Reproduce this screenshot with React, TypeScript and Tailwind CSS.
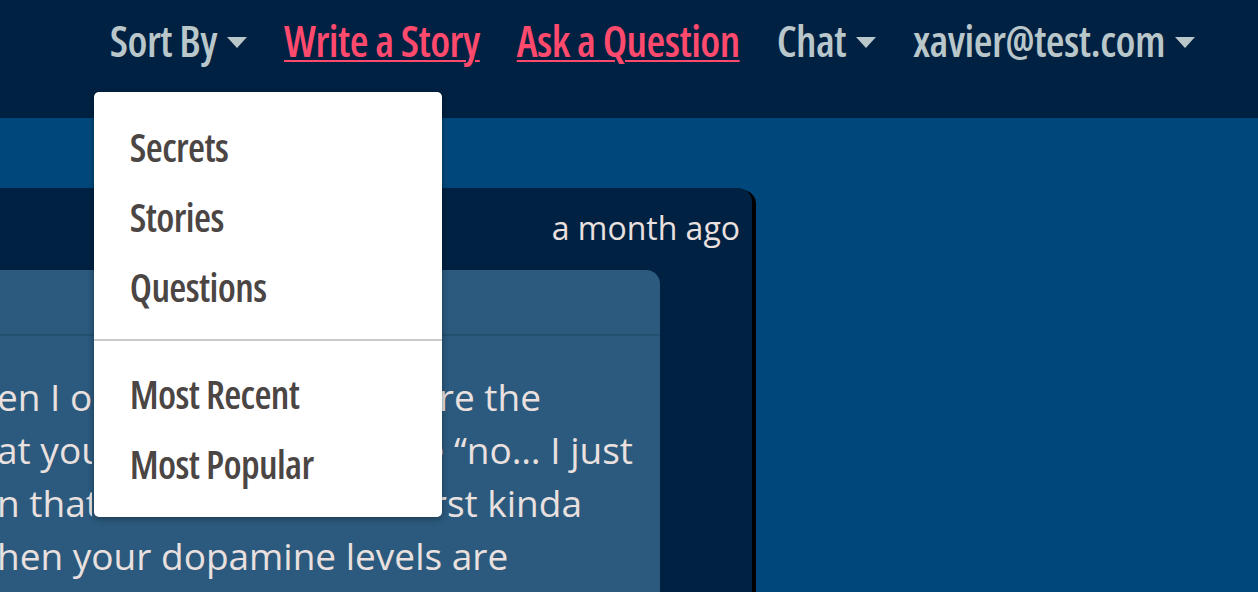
import React from "react";

const cond = { fontFamily: '"Open Sans", "DejaVu Sans", sans-serif' };
const body = { fontFamily: '"Open Sans", "Noto Sans", sans-serif' };

function Caret() {
  return <span className="inline-block w-0 h-0 border-t-[11px] border-t-[#b9c7cb] border-x-[10px] border-x-transparent ml-[10px] mt-[2px]" />;
}

function NavItem({ label, caret, link }: { label: string; caret?: boolean; link?: boolean }) {
  return (
    <div className="flex items-center whitespace-nowrap">
      <span
        className={
          link
            ? "text-[#ff4a6d] underline decoration-2 underline-offset-[3px]"
            : "text-[#b9c7cb]"
        }
      >
        {label}
      </span>
      {caret && <Caret />}
    </div>
  );
}

const items1 = ["Secrets", "Stories", "Questions"];
const items2 = ["Most Recent", "Most Popular"];

const lines = [
  { left: "en I or", right: "ore the", w: "w-[544px]" },
  { left: "at you", right: "e \u201cno\u2026 I just", w: "w-[636px]" },
  { left: "n that j", right: "rst kinda", w: "w-[585px]" },
];

export default function App() {
  return (
    <div className="w-[1258px] h-[592px] overflow-hidden bg-[#00487b]" style={body}>
      <nav className="h-[118px] bg-[#012142] flex justify-end items-start pr-[63px] pt-[18px]" style={cond}>
        <div className="flex items-center gap-[37px] text-[43px] font-semibold font-stretch-[75%] leading-[46px] tracking-[-0.55px]">
          <div className="relative">
            <NavItem label="Sort By" caret />
            <div className="absolute left-[-16px] top-[74px] w-[348px] bg-white rounded-[5px] shadow-[0_2px_6px_rgba(0,0,0,0.35)] z-10 pt-[20px] pb-[18px] tracking-[-0.6px]">
              {items1.map((t) => (
                <div key={t} className="h-[70px] flex items-center pl-[36px] text-[#4b4544] text-[39px] whitespace-nowrap">
                  {t}
                </div>
              ))}
              <div className="h-[2px] bg-[#c9c9c9] mt-[17px] mb-[18px]" />
              {items2.map((t) => (
                <div key={t} className="h-[70px] flex items-center pl-[36px] text-[#4b4544] text-[39px] whitespace-nowrap">
                  {t}
                </div>
              ))}
            </div>
          </div>
          <NavItem label="Write a Story" link />
          <NavItem label="Ask a Question" link />
          <NavItem label="Chat" caret />
          <NavItem label="xavier@test.com" caret />
        </div>
      </nav>
      <main className="pt-[70px]">
        <div className="w-[752px] h-[420px] bg-[#012142] rounded-tr-[14px] shadow-[4px_2px_0_#000]">
          <div className="h-[82px] flex justify-end items-start pr-[12px] pt-[18px]">
            <span className="text-[32px] font-normal text-[#e9e0df] leading-[44px] whitespace-nowrap">a month ago</span>
          </div>
          <div className="w-[660px] h-[340px] bg-[#2b5a7e] rounded-tr-[14px]">
            <div className="h-[66px] border-b-2 border-[#23506f]" />
            <div className="pt-[34px] text-[37px] font-normal text-[#e9e0df] leading-[53px]">
              {lines.map((l) => (
                <div key={l.left} className={"flex justify-between whitespace-nowrap -ml-[3px] " + l.w}>
                  <span className="w-[95px] overflow-hidden">{l.left}</span>
                  <span>{l.right}</span>
                </div>
              ))}
              <div className="whitespace-nowrap -ml-[3px]">hen your dopamine levels are</div>
            </div>
          </div>
        </div>
      </main>
    </div>
  );
}
